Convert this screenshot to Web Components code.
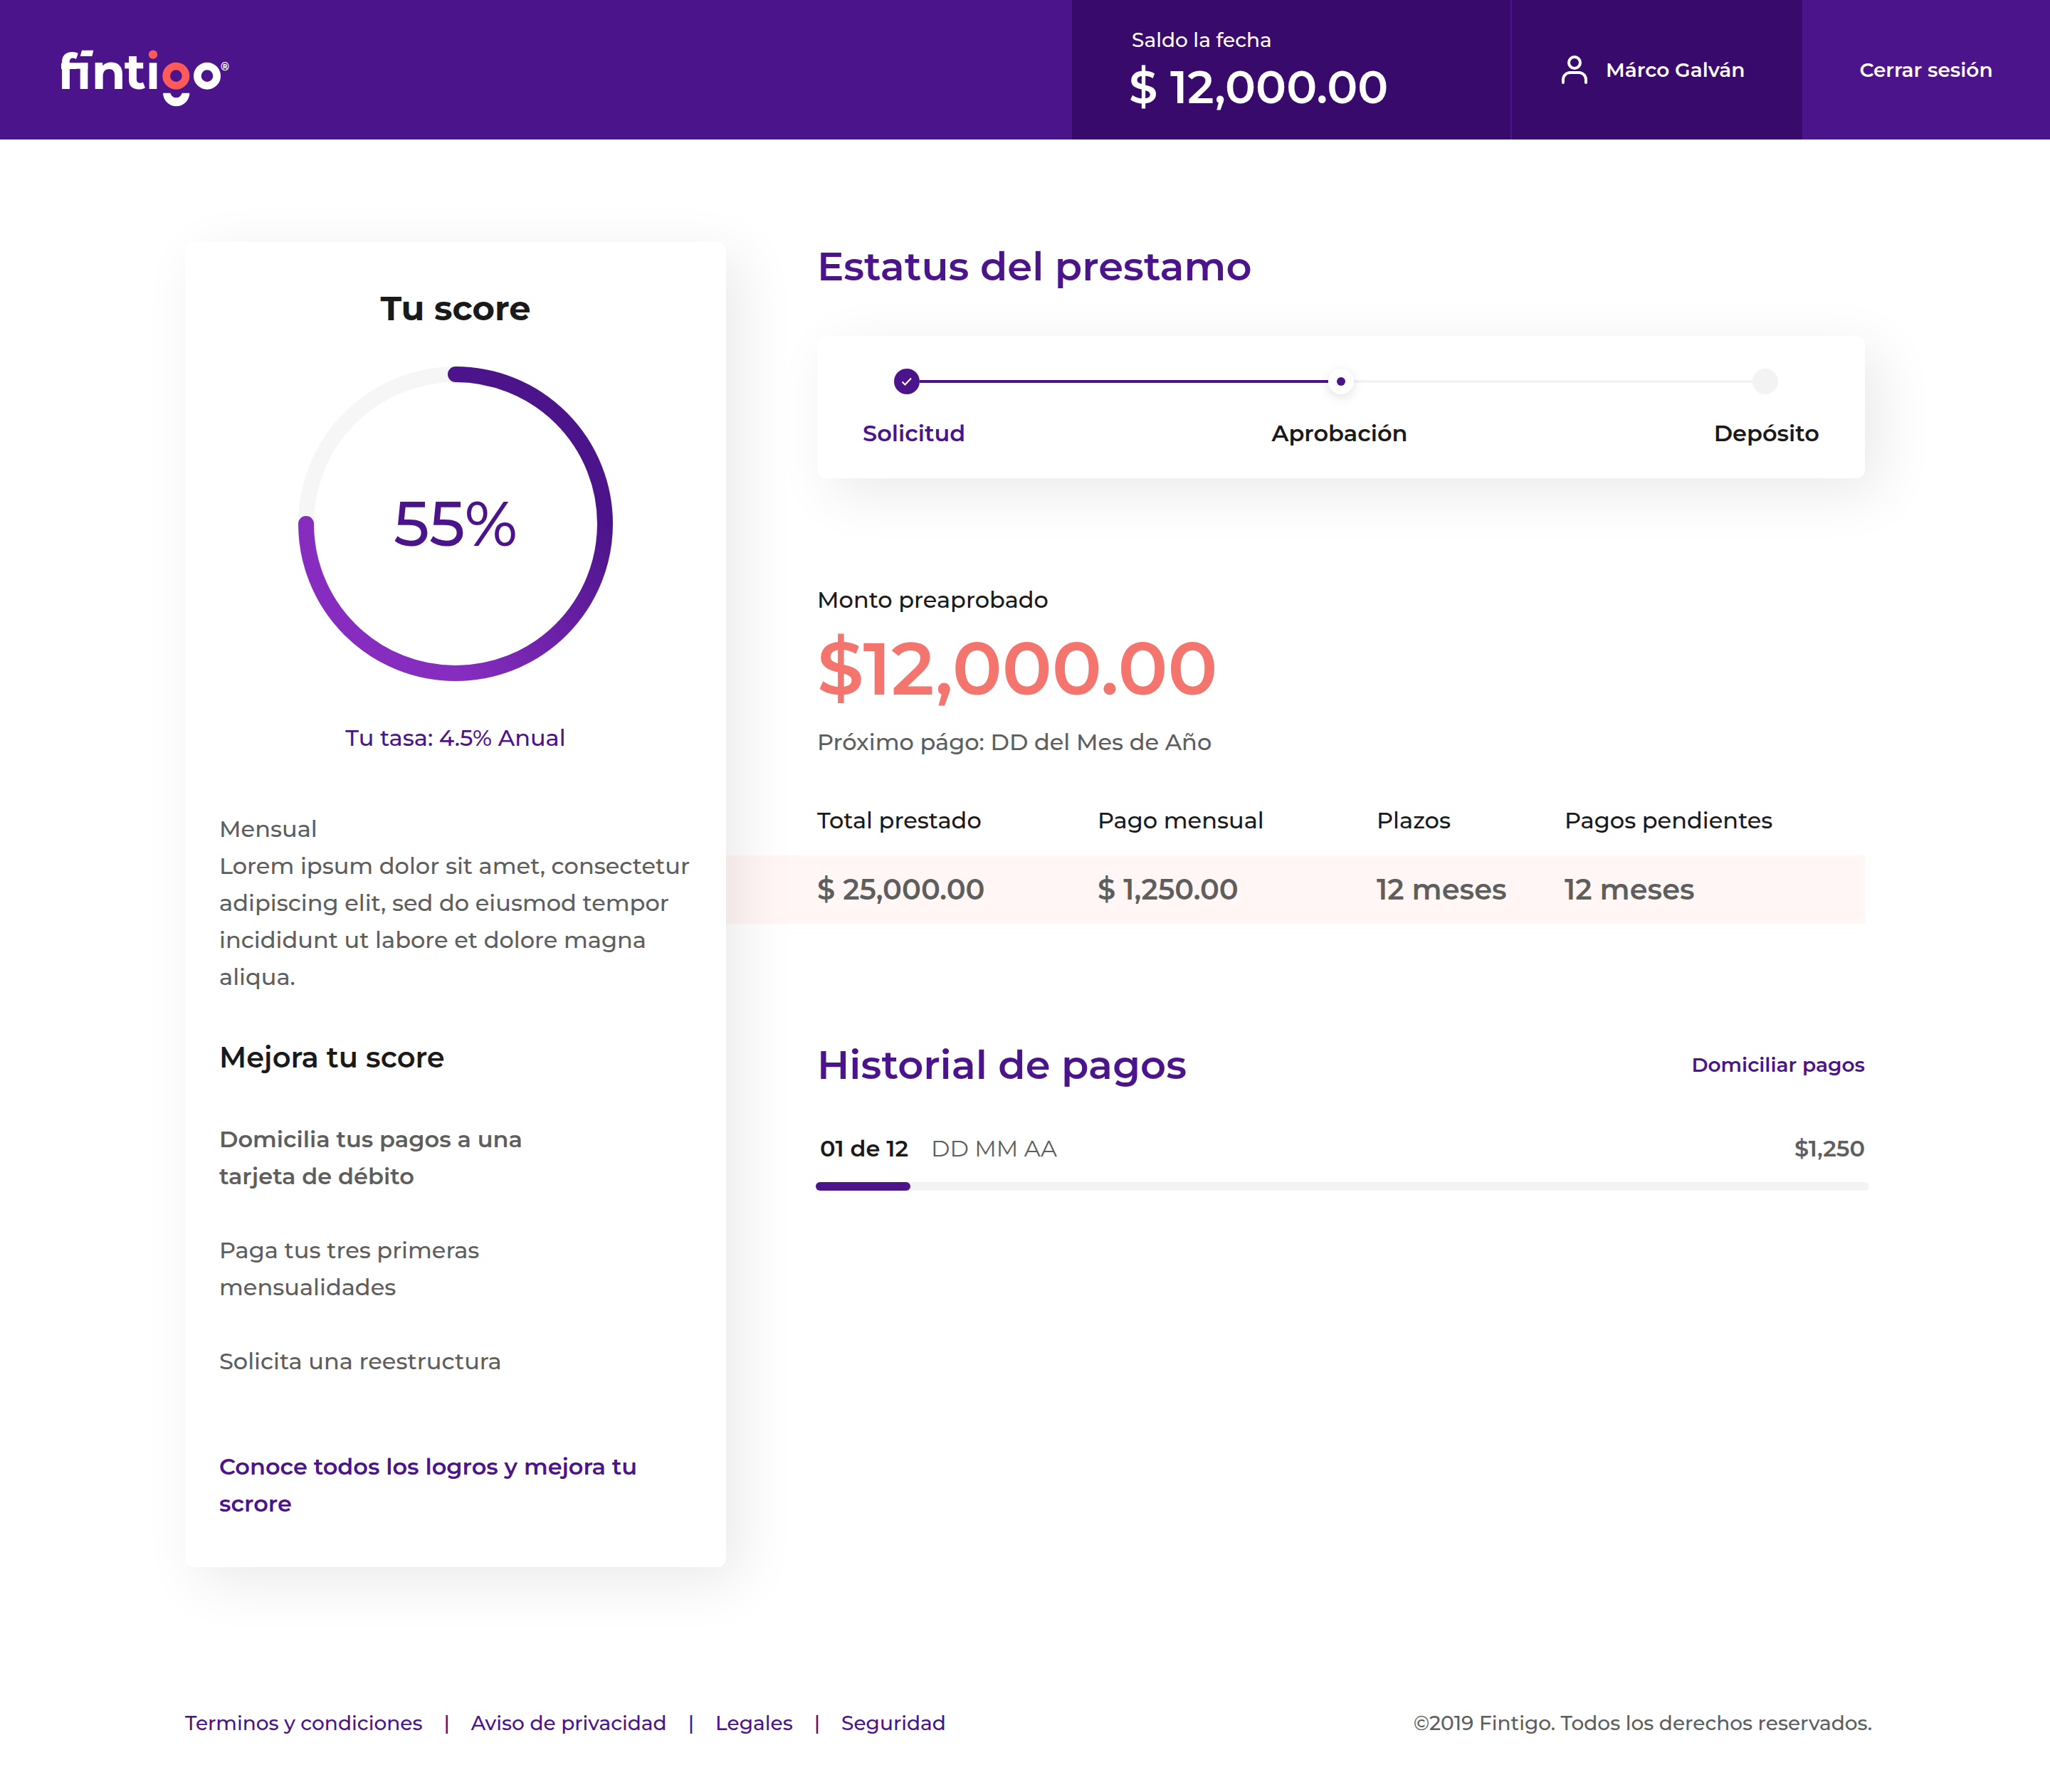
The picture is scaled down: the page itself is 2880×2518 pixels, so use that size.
<!DOCTYPE html>
<html lang="es">
<head>
<meta charset="utf-8">
<meta name="viewport" content="width=device-width, initial-scale=1">
<title>Fintigo – Mi préstamo</title>
<style>
  body {
    margin: 0;
    background: #fff;
    font-family: Montserrat, "Open Sans", sans-serif;
    font-weight: 500;
    font-size: 32px;
    line-height: 40px;
    --brand: #4c148a;
    --brand-dark: #380a6b;
    --ink: #1a1a1a;
    --muted: #5e5e5e;
    --coral: #f3756e;
    --track: #f3f3f3;
    --card-shadow: 20px 20px 80px rgba(0, 0, 0, .088);
    color: var(--muted);
  }
</style>
</head>
<body>
<fin-app></fin-app>

<script>
const define = (name, html) => {
  const template = document.createElement('template');
  template.innerHTML = html;
  customElements.define(name, class extends HTMLElement {
    constructor() {
      super();
      this.attachShadow({ mode: 'open' }).append(template.content.cloneNode(true));
    }
  });
};

define('fin-logo', `
  <style>
    :host { display: block; }
    svg { display: block; width: 240px; height: 84px; overflow: visible; }
    text { font-family: Montserrat, sans-serif; font-weight: 700; font-size: 208px; fill: #fff; }
    .reg { font-size: 46px; }
    .cover { fill: var(--brand); }
  </style>
  <svg viewBox="72 54 720 252" role="img" aria-label="fintigo">
    <text x="62" y="225">f</text>
    <rect class="cover" x="54" y="104" width="24" height="44"/>
    <g fill="#fff">
      <rect x="104" y="115" width="86" height="25"/>
      <rect x="158" y="115" width="32" height="110"/>
      <polygon points="165,62 214,62 208,87 158,87"/>
      <rect x="449" y="115" width="32" height="110"/>
      <path d="M507 242H538A25 25 0 0 0 587 242H619A56 56 0 0 1 507 242Z"/>
    </g>
    <text x="206" y="225">n</text>
    <text x="344" y="225">t</text>
    <circle cx="465" cy="80" r="18.500" fill="#ff5a5a"/>
    <circle cx="562" cy="170" r="41" fill="none" stroke="#ff5a5a" stroke-width="32"/>
    <circle cx="693" cy="170" r="41" fill="none" stroke="#fff" stroke-width="32"/>
    <text class="reg" x="750" y="147">®</text>
  </svg>`);

define('fin-header', `
  <style>
    :host { display: flex; height: 196px; background: var(--brand); color: #fff; font-size: 28px; }
    .home { margin: 68px auto 0 84px; }
    .cell { display: flex; box-sizing: border-box; align-items: center; background: var(--brand-dark); }
    .balance { display: block; width: 616px; padding: 36px 0 0 80px; }
    .balance p { margin: 0; }
    .balance .label { padding-left: 4px; }
    .balance .amount { margin-top: 6px; font-size: 64px; line-height: 80px; font-weight: 600; }
    .user { width: 410px; padding-left: 68px; gap: 24px; border-left: 2px solid var(--brand); font-weight: 600; }
    svg { width: 40px; height: 44px; }
    a { color: inherit; text-decoration: none; }
    .logout { width: 348px; display: flex; align-items: center; justify-content: center; font-weight: 600; }
  </style>
  <a class="home" href="#"><fin-logo></fin-logo></a>
  <div class="cell balance"><p class="label">Saldo la fecha</p><p class="amount">$ 12,000.00</p></div>
  <a class="cell user" href="#cuenta">
    <svg viewBox="0 0 40 44" fill="none" stroke="#fff" stroke-width="4" stroke-linecap="round" aria-hidden="true">
      <circle cx="20" cy="12" r="8"/>
      <path d="M4 40V36A10 10 0 0 1 14 26H26A10 10 0 0 1 36 36V40"/>
    </svg>
    Márco Galván
  </a>
  <a class="logout" href="#salir">Cerrar sesión</a>`);

define('fin-ring', `
  <style>
    :host { display: grid; width: 442px; height: 442px; place-items: center; font-size: 88px; color: var(--brand); }
    svg, span { grid-area: 1 / 1; }
    svg { width: 442px; height: 442px; }
  </style>
  <svg viewBox="0 0 442 442" fill="none" stroke-width="22" stroke-linecap="round" aria-hidden="true">
    <defs>
      <linearGradient id="sweep" gradientUnits="userSpaceOnUse" x1="431" y1="221" x2="221" y2="431">
        <stop offset="0" stop-color="#4c148a"/><stop offset="1" stop-color="#862dc0"/>
      </linearGradient>
    </defs>
    <circle cx="221" cy="221" r="210" stroke="#f6f6f6"/>
    <path d="M221 11A210 210 0 1 1 11 221" stroke="url(#sweep)"/>
  </svg>
  <span><slot></slot></span>`);

define('fin-score', `
  <style>
    :host {
      display: flex; flex-direction: column; box-sizing: border-box; padding: 63px 48px;
      background: #fff; border-radius: 12px; box-shadow: var(--card-shadow);
      position: relative; z-index: 1; line-height: 52px;
    }
    h2, h3, p, ul { margin: 0; }
    h2 { text-align: center; color: var(--ink); font-size: 48px; line-height: 60px; font-weight: 700; }
    fin-ring { align-self: center; margin-top: 52px; }
    .rate { margin-top: 54px; text-align: center; color: var(--brand); }
    .text { margin-top: 76px; }
    h3 { margin-top: 61px; color: var(--ink); font-size: 40px; font-weight: 600; }
    ul { margin-top: 63px; padding: 0; list-style: none; display: flex; flex-direction: column; gap: 52px; max-width: 480px; }
    .next, a { font-weight: 600; }
    a { margin-top: 96px; color: var(--brand); text-decoration: none; }
  </style>
  <h2>Tu score</h2>
  <fin-ring>55%</fin-ring>
  <p class="rate">Tu tasa: 4.5% Anual</p>
  <div class="text">
    <p>Mensual</p>
    <p>Lorem ipsum dolor sit amet, consectetur adipiscing elit, sed do eiusmod tempor incididunt ut labore et dolore magna aliqua.</p>
  </div>
  <h3>Mejora tu score</h3>
  <ul>
    <li class="next">Domicilia tus pagos a una tarjeta de débito</li>
    <li>Paga tus tres primeras mensualidades</li>
    <li>Solicita una reestructura</li>
  </ul>
  <a href="#logros">Conoce todos los logros y mejora tu scrore</a>`);

define('fin-steps', `
  <style>
    :host { display: block; padding: 46px 0 43px; background: #fff; border-radius: 12px; box-shadow: var(--card-shadow); }
    .track { display: flex; align-items: center; padding: 0 122px 0 108px; }
    .dot { display: grid; place-items: center; flex: none; width: 36px; height: 36px; border-radius: 50%; background: var(--track); }
    .done { background: var(--brand); }
    .now { background: #fff; box-shadow: 0 4px 16px rgba(0, 0, 0, .12); position: relative; z-index: 1; }
    .now::before { content: ""; width: 12px; height: 12px; border-radius: 50%; background: var(--brand); }
    .line { flex: 560; height: 4px; background: var(--track); }
    .line.full { flex: 574; background: var(--brand); }
    svg { width: 36px; height: 36px; }
    ol { display: flex; justify-content: space-between; margin: 35px 0 0; padding: 0 64px; list-style: none; font-weight: 600; color: var(--ink); }
    .past { color: var(--brand); }
  </style>
  <div class="track" aria-hidden="true">
    <span class="dot done"><svg viewBox="0 0 36 36"><path d="M11.500 18.500L15.500 22.500L24 13.500" fill="none" stroke="#fff" stroke-width="2"/></svg></span>
    <span class="line full"></span>
    <span class="dot now"></span>
    <span class="line"></span>
    <span class="dot"></span>
  </div>
  <ol><li class="past">Solicitud</li><li>Aprobación</li><li>Depósito</li></ol>`);

define('fin-loan', `
  <style>
    :host { display: block; }
    p { margin: 0 0 0 128px; }
    .label { color: var(--ink); }
    .amount { margin-top: 15px; color: var(--coral); font-size: 104px; line-height: 122px; font-weight: 600; }
    .next { margin-top: 23px; }
    table { width: 100%; margin-top: 70px; border-collapse: collapse; table-layout: fixed; text-align: left; }
    th, td { padding: 0; }
    th:first-child, td:first-child { padding-left: 128px; }
    th { padding-bottom: 29px; font-weight: 500; color: var(--ink); }
    td { height: 96px; font-size: 40px; font-weight: 600; background: #fff6f5; }
    .total { width: 394px; } .monthly { width: 392px; } .term { width: 264px; }
  </style>
  <p class="label">Monto preaprobado</p>
  <p class="amount">$12,000.00</p>
  <p class="next">Próximo págo: DD del Mes de Año</p>
  <table>
    <thead><tr><th class="total">Total prestado</th><th class="monthly">Pago mensual</th><th class="term">Plazos</th><th>Pagos pendientes</th></tr></thead>
    <tbody><tr><td>$ 25,000.00</td><td>$ 1,250.00</td><td>12 meses</td><td>12 meses</td></tr></tbody>
  </table>`);

define('fin-history', `
  <style>
    :host { display: block; }
    header, .row { display: flex; align-items: center; justify-content: space-between; }
    h2 { margin: 0; color: var(--brand); font-size: 56px; line-height: 68px; font-weight: 600; }
    a { color: var(--brand); font-size: 28px; font-weight: 600; text-decoration: none; }
    .row { margin-top: 64px; padding-left: 4px; font-weight: 600; }
    label { display: flex; gap: 32px; color: var(--ink); }
    time { font-weight: 400; color: var(--muted); }
    .bar { display: flex; margin: 27px -6px 0 -2px; }
    progress { flex: 1; height: 12px; appearance: none; border: 0; }
    progress::-webkit-progress-bar { background: var(--track); border-radius: 6px; }
    progress::-webkit-progress-value { background: var(--brand); border-radius: 6px; }
  </style>
  <header><h2>Historial de pagos</h2><a href="#domiciliar">Domiciliar pagos</a></header>
  <div class="row"><label for="paid"><span>01 de 12</span><time>DD MM AA</time></label><span>$1,250</span></div>
  <div class="bar"><progress id="paid" max="100" value="9"></progress></div>`);

define('fin-footer', `
  <style>
    :host { display: flex; justify-content: space-between; padding: 0 250px 77px 260px; font-size: 28px; }
    nav { display: flex; gap: 30px; color: var(--brand); }
    a { color: inherit; text-decoration: none; }
  </style>
  <nav>
    <a href="#terminos">Terminos y condiciones</a><span>|</span>
    <a href="#privacidad">Aviso de privacidad</a><span>|</span>
    <a href="#legales">Legales</a><span>|</span>
    <a href="#seguridad">Seguridad</a>
  </nav>
  <span>©2019 Fintigo. Todos los derechos reservados.</span>`);

define('fin-app', `
  <style>
    :host { display: block; }
    main { display: grid; grid-template-columns: 760px 1fr; align-items: start; padding: 144px 260px 199px; }
    h1 { margin: 0 0 64px 128px; color: var(--brand); font-size: 56px; line-height: 68px; font-weight: 600; }
    fin-steps { margin-left: 128px; }
    fin-loan { margin-top: 151px; }
    fin-history { margin: 164px 0 0 128px; }
  </style>
  <fin-header></fin-header>
  <main>
    <fin-score></fin-score>
    <section>
      <h1>Estatus del prestamo</h1>
      <fin-steps></fin-steps>
      <fin-loan></fin-loan>
      <fin-history></fin-history>
    </section>
  </main>
  <fin-footer></fin-footer>`);
</script>
</body>
</html>
